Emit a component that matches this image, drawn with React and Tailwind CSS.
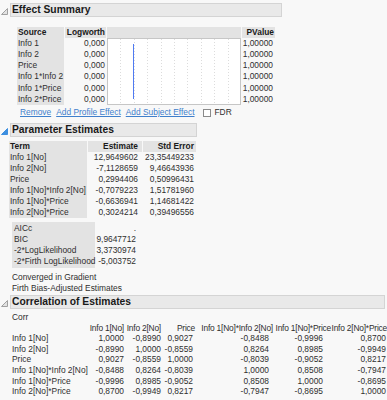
import React from "react";

const EFFECTS = ["Info 1", "Info 2", "Price", "Info 1*Info 2", "Info 1*Price", "Info 2*Price"];

const PARAMS = [
    ["Info 1[No]", "12,9649602", "23,35449233"],
    ["Info 2[No]", "-7,1128659", "9,46643936"],
    ["Price", "0,2994406", "0,50996431"],
    ["Info 1[No]*Info 2[No]", "-0,7079223", "1,51781960"],
    ["Info 1[No]*Price", "-0,6636941", "1,14681422"],
    ["Info 2[No]*Price", "0,3024214", "0,39496556"],
];

const FIT = [
    ["AICc", "."],
    ["BIC", "9,9647712"],
    ["-2*LogLikelihood", "3,3730974"],
    ["-2*Firth LogLikelihood", "-5,003752"],
];

const CORR_COLS = [
    { label: "Info 1[No]", w: "w-[36px]", pr: "pr-0" },
    { label: "Info 2[No]", w: "w-[37px]", pr: "pr-0" },
    { label: "Price", w: "w-[34px]", pr: "pr-[2px]" },
    { label: "Info 1[No]*Info 2[No]", w: "w-[78px]", pr: "pr-[4px]" },
    { label: "Info 1[No]*Price", w: "w-[58px]", pr: "pr-[8px]" },
    { label: "Info 2[No]*Price", w: "w-[56px]", pr: "pr-[1px]" },
];

const CORR = [
    ["Info 1[No]", "1,0000", "-0,8990", "0,9027", "-0,8488", "-0,9996", "0,8700"],
    ["Info 2[No]", "-0,8990", "1,0000", "-0,8559", "0,8264", "0,8985", "-0,9949"],
    ["Price", "0,9027", "-0,8559", "1,0000", "-0,8039", "-0,9052", "0,8217"],
    ["Info 1[No]*Info 2[No]", "-0,8488", "0,8264", "-0,8039", "1,0000", "0,8508", "-0,7947"],
    ["Info 1[No]*Price", "-0,9996", "0,8985", "-0,9052", "0,8508", "1,0000", "-0,8695"],
    ["Info 2[No]*Price", "0,8700", "-0,9949", "0,8217", "-0,7947", "-0,8695", "1,0000"],
];

function Disclosure({ active }) {
    const c = active ? "#3d8fe0" : "#a0a0a0";
    return (
        <svg width="7" height="7" viewBox="0 0 7 7">
            <path d="M6.5 0.5 V6.5 H0.5 Z" fill={active ? c : "#e2e2e2"} stroke={c} strokeWidth="1" />
        </svg>
    );
}

function OutlineHeader({ title, barWidth, active }) {
    return (
        <div className="flex items-start">
            <div className="w-[10px] pl-[1px] pt-[5px]">
                <Disclosure active={active} />
            </div>
            <div
                className={`h-[14px] ${barWidth} border border-[#d4d4d4] bg-[#e9e9e9] pl-[1px] text-[10.3px] font-bold leading-[12px] text-[#1a1a1a]`}
            >
                {title}
            </div>
        </div>
    );
}

function LogworthChart() {
    const lines = [1, 2, 3, 4, 5, 6, 7, 8, 9];
    return (
        <svg width="134" height="67" viewBox="0 0 134 67" className="block">
            <rect x="0.5" y="0.5" width="133" height="66" fill="#ffffff" stroke="#c6c6c6" />
            {lines.map((i) => (
                <line
                    key={i}
                    x1={Math.round(i * 13.4) + 0.5}
                    x2={Math.round(i * 13.4) + 0.5}
                    y1="1"
                    y2="66"
                    stroke="#dcdcdc"
                    strokeDasharray="1 2"
                />
            ))}
            <line x1="26.5" x2="26.5" y1="6" y2="61" stroke="#4f7af2" strokeWidth="1" />
        </svg>
    );
}

export default function App() {
    return (
        <div className="h-[400px] w-[387px] overflow-hidden bg-[#f8f8f8] pt-[3px] font-['Liberation_Sans',Arial,sans-serif] text-[8.4px] leading-[11px] text-[#2f2f2f]">
            {/* Effect Summary */}
            <OutlineHeader title="Effect Summary" barWidth="w-[272px]" />

            <div className="ml-[17px] mt-[10px] flex">
                <div className="w-[47px] bg-[#e3e3e3]">
                    <div className="h-[11px] pl-[1px] font-bold text-[#1a1a1a]">Source</div>
                    {EFFECTS.map((e) => (
                        <div key={e} className="h-[11.17px] whitespace-nowrap pl-[1px] leading-[11.17px]">
                            {e}
                        </div>
                    ))}
                </div>
                <div className="ml-[1px] w-[41px]">
                    <div className="h-[11px] bg-[#e3e3e3] pr-[1px] text-right font-bold text-[#1a1a1a]">Logworth</div>
                    {EFFECTS.map((e) => (
                        <div key={e} className="h-[11.17px] pr-[1px] text-right leading-[11.17px]">
                            0,000
                        </div>
                    ))}
                </div>
                <div className="ml-[1px] w-[134px]">
                    <div className="h-[11px] bg-[#e3e3e3]" />
                    <LogworthChart />
                </div>
                <div className="ml-[1px] w-[33px]">
                    <div className="h-[11px] bg-[#e3e3e3] pr-[1px] text-right font-bold text-[#1a1a1a]">PValue</div>
                    {EFFECTS.map((e) => (
                        <div key={e} className="h-[11.17px] pr-[2px] text-right leading-[11.17px]">
                            1,00000
                        </div>
                    ))}
                </div>
            </div>

            <div className="ml-[20px] mt-[2px] flex h-[11px] items-center text-[#3f7fcc]">
                <span className="underline">Remove</span>
                <span className="ml-[5px] underline">Add Profile Effect</span>
                <span className="ml-[5px] underline">Add Subject Effect</span>
                <span className="ml-[8px] h-[8px] w-[8px] border border-[#8a8a8a] bg-white" />
                <span className="ml-[4px] text-[#2f2f2f]">FDR</span>
            </div>

            {/* Parameter Estimates */}
            <div className="mt-[5px]">
                <OutlineHeader title="Parameter Estimates" barWidth="w-[187px]" active />
            </div>

            <div className="ml-[9px] mt-[4px] flex">
                <div className="w-[78px] bg-[#e3e3e3]">
                    <div className="h-[11px] pl-[1px] font-bold text-[#1a1a1a]">Term</div>
                    {PARAMS.map((p) => (
                        <div key={p[0]} className="h-[11px] whitespace-nowrap pl-[1px]">
                            {p[0]}
                        </div>
                    ))}
                </div>
                <div className="ml-[1px] w-[54px]">
                    <div className="h-[11px] bg-[#e3e3e3] pr-[4px] text-right font-bold text-[#1a1a1a]">Estimate</div>
                    {PARAMS.map((p) => (
                        <div key={p[0]} className="h-[11px] pr-[4px] text-right">
                            {p[1]}
                        </div>
                    ))}
                </div>
                <div className="ml-[1px] w-[53px]">
                    <div className="h-[11px] bg-[#e3e3e3] pr-[2px] text-right font-bold text-[#1a1a1a]">Std Error</div>
                    {PARAMS.map((p) => (
                        <div key={p[0]} className="h-[11px] pr-[2px] text-right">
                            {p[2]}
                        </div>
                    ))}
                </div>
            </div>

            <div className="ml-[12px] mt-[4px] flex">
                <div className="w-[83px] bg-[#e3e3e3] py-[1px] pl-[2px]">
                    {FIT.map((f) => (
                        <div key={f[0]} className="h-[11px] whitespace-nowrap">
                            {f[0]}
                        </div>
                    ))}
                </div>
                <div className="w-[41px] py-[1px] text-right">
                    {FIT.map((f) => (
                        <div key={f[0]} className="h-[11px]">
                            {f[1]}
                        </div>
                    ))}
                </div>
            </div>

            <div className="ml-[12px] mt-[4px]">
                <div className="h-[11px]">Converged in Gradient</div>
                <div className="h-[11px]">Firth Bias-Adjusted Estimates</div>
            </div>

            {/* Correlation of Estimates */}
            <div className="mt-[1px]">
                <OutlineHeader title="Correlation of Estimates" barWidth="w-[375px]" />
            </div>

            <div className="ml-[12px] mt-[3px] leading-[10.6px]">
                <div className="h-[10.6px]">Corr</div>
                <div className="flex h-[10.6px]">
                    <div className="w-[76px]" />
                    {CORR_COLS.map((c) => (
                        <div key={c.label} className={`${c.w} whitespace-nowrap text-right tracking-[-0.2px]`}>
                            {c.label}
                        </div>
                    ))}
                </div>
                {CORR.map((row) => (
                    <div key={row[0]} className="flex h-[10.6px]">
                        <div className="w-[76px] whitespace-nowrap">{row[0]}</div>
                        {row.slice(1).map((v, i) => (
                            <div key={i} className={`${CORR_COLS[i].w} ${CORR_COLS[i].pr} text-right`}>
                                {v}
                            </div>
                        ))}
                    </div>
                ))}
            </div>
        </div>
    );
}
